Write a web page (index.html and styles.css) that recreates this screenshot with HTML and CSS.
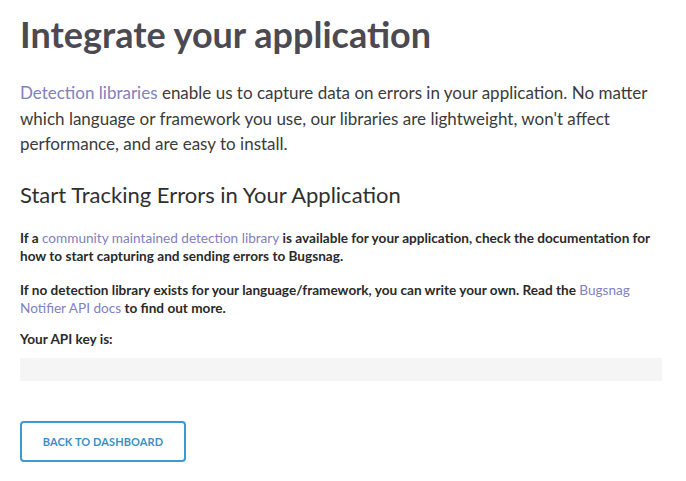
FILE: index.html
```html
<!DOCTYPE html>
<html>
<head>
<meta charset="utf-8">
<link rel="stylesheet" href="styles.css">
</head>
<body>
<main class="page">
  <h1 class="title">Integrate your application</h1>
  <p class="lead"><a class="link" href="#">Detection libraries</a> enable us to capture data on errors in your application. No matter which language or framework you use, our libraries are lightweight, won't affect performance, and are easy to install.</p>
  <h2 class="subtitle">Start Tracking Errors in Your Application</h2>
  <p class="text">If a <a class="link" href="#">community maintained detection library</a> is available for your application, check the documentation for how to start capturing and sending errors to Bugsnag.</p>
  <p class="text text-last">If no detection library exists for your language/framework, you can write your own. Read the <a class="link" href="#">Bugsnag Notifier API docs</a> to find out more.</p>
  <p class="text key-label">Your API key is:</p>
  <div class="key-box"></div>
  <a class="btn" href="#">BACK TO DASHBOARD</a>
</main>
</body>
</html>
```
FILE: styles.css
```css
html, body {
  margin: 0;
  padding: 0;
  background: #ffffff;
}
.page {
  padding: 12px 24px 20px 20px;
  font-family: Lato, "Liberation Sans", sans-serif;
  color: #333;
  display: flex;
  flex-direction: column;
  align-items: flex-start;
}
.title {
  font-family: Lato, sans-serif;
  font-weight: 700;
  font-size: 36px;
  line-height: 44px;
  color: #4b4a52;
  margin: 0 0 24px 0;
}
.lead {
  font-family: Lato, sans-serif;
  font-size: 17px;
  line-height: 25.5px;
  color: #3b3b3b;
  margin: 0 0 24px 0;
}
.subtitle {
  font-family: Lato, sans-serif;
  font-weight: 400;
  font-size: 22px;
  line-height: 28px;
  color: #2f2f2f;
  margin: 0 0 20px 0;
}
.text {
  font-family: Lato, sans-serif;
  font-weight: 700;
  font-size: 13.6px;
  line-height: 18px;
  color: #2a2a2a;
  margin: 0 0 16px 0;
}
.text-last {
  margin-bottom: 13px;
}
.key-label {
  margin-bottom: 10px;
}
.link {
  color: #8280bf;
  text-decoration: none;
  font-weight: inherit;
}
.text .link {
  font-weight: 400;
}
.key-box {
  align-self: stretch;
  height: 23px;
  background: #f5f5f5;
  margin-bottom: 40px;
}
.btn {
  box-sizing: border-box;
  width: 166px;
  height: 41px;
  border: 2px solid #3b9ad2;
  border-radius: 4px;
  display: flex;
  align-items: center;
  justify-content: center;
  font-family: Lato, sans-serif;
  font-weight: 700;
  font-size: 11px;
  letter-spacing: 0.1px;
  color: #3a8fc4;
  text-decoration: none;
}
```
